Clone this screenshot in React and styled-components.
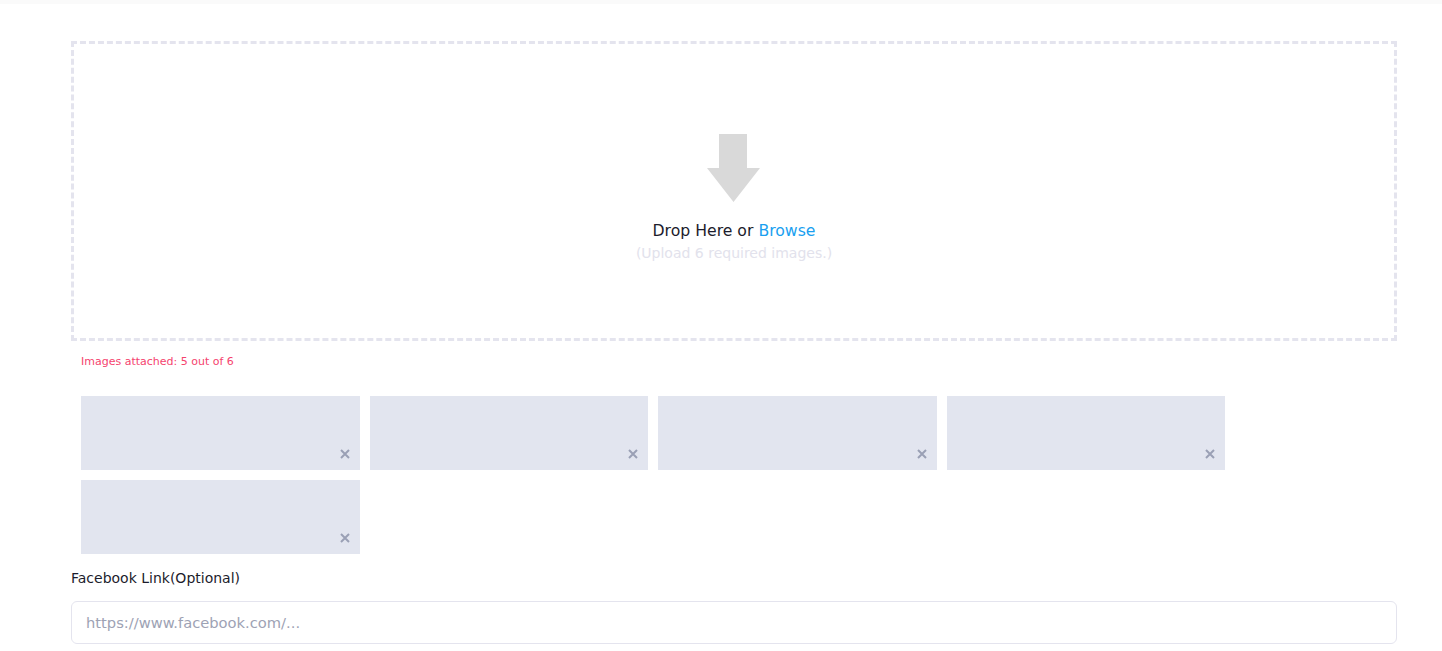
import styled, { createGlobalStyle } from "styled-components";

const GlobalStyle = createGlobalStyle`
  body {
    margin: 0;
    background: #ffffff;
    font-family: "DejaVu Sans", "Liberation Sans", sans-serif;
  }
  * {
    box-sizing: border-box;
  }
`;

const TopBar = styled.div`
  height: 4px;
  background: #fafafa;
`;

const Page = styled.main`
  padding: 37px 45px 0 71px;
  display: flex;
  flex-direction: column;
`;

const DropZone = styled.div`
  height: 300px;
  border: 3px dashed #e4e4ee;
  display: flex;
  flex-direction: column;
  align-items: center;
  justify-content: center;
  padding-top: 14px;
`;

const ArrowWrap = styled.div`
  width: 54px;
  height: 68px;
  margin-bottom: 19px;
`;

const DropText = styled.div`
  font-size: 15.7px;
  color: #1c1c2c;
  line-height: 20px;
`;

const Browse = styled.span`
  color: #1a9ff0;
  cursor: pointer;
`;

const Hint = styled.div`
  font-size: 14px;
  color: #e2e2ec;
  line-height: 20px;
  margin-top: 2px;
`;

const Counter = styled.div`
  font-size: 11px;
  color: #f5436e;
  margin: 13px 0 0 10px;
  line-height: 16px;
`;

const Thumbs = styled.div`
  display: grid;
  grid-template-columns: repeat(4, 278.5px);
  grid-auto-rows: 74px;
  gap: 10px;
  margin: 26px 0 0 10px;
`;

const Thumb = styled.div`
  background: #e2e5ef;
  position: relative;
`;

const Remove = styled.button`
  position: absolute;
  right: 9px;
  bottom: 10px;
  width: 12px;
  height: 12px;
  padding: 0;
  border: 0;
  background: none;
  cursor: pointer;
  display: flex;
  align-items: center;
  justify-content: center;
`;

const Label = styled.label`
  font-size: 14px;
  color: #1c1c2c;
  margin-top: 14px;
  line-height: 20px;
`;

const Input = styled.input`
  margin-top: 13px;
  height: 43px;
  border: 1px solid #e4e4ee;
  border-radius: 6px;
  padding: 0 14px;
  font-family: inherit;
  font-size: 14.7px;
  color: #1c1c2c;
  outline: none;

  &::placeholder {
    color: #9da2b4;
  }
`;

const Arrow = () => (
  <svg width="54" height="68" viewBox="0 0 54 68">
    <path d="M12 0 H40 V34 H53 L26.5 68 L0 34 H12 Z" fill="#d9d9d9" />
  </svg>
);

const Cross = () => (
  <svg width="10" height="10" viewBox="0 0 10 10">
    <path d="M1 1 L9 9 M9 1 L1 9" stroke="#9aa0b5" strokeWidth="2" />
  </svg>
);

const images = [1, 2, 3, 4, 5];

const App = () => {
  return (
    <>
      <GlobalStyle />
      <TopBar />
      <Page>
        <DropZone>
          <ArrowWrap>
            <Arrow />
          </ArrowWrap>
          <DropText>
            Drop Here or <Browse>Browse</Browse>
          </DropText>
          <Hint>(Upload 6 required images.)</Hint>
        </DropZone>
        <Counter>Images attached: 5 out of 6</Counter>
        <Thumbs>
          {images.map((id) => (
            <Thumb key={id}>
              <Remove>
                <Cross />
              </Remove>
            </Thumb>
          ))}
        </Thumbs>
        <Label>Facebook Link(Optional)</Label>
        <Input placeholder="https://www.facebook.com/..." />
      </Page>
    </>
  );
};

export default App;
